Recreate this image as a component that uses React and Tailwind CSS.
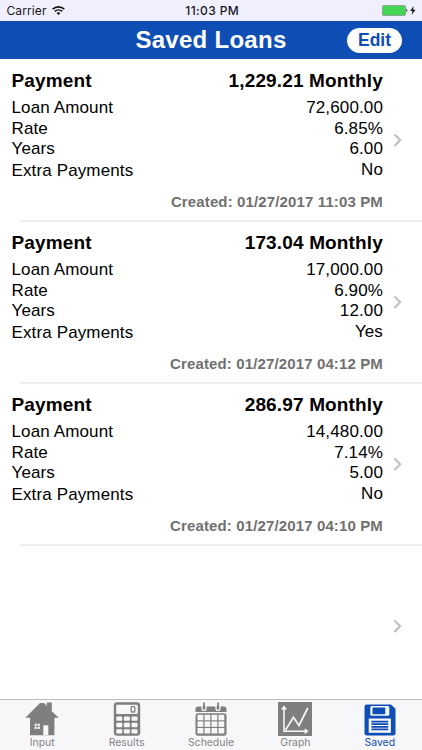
const LOANS = [
  { payment: '1,229.21 Monthly', amount: '72,600.00', rate: '6.85%', years: '6.00', extra: 'No', created: 'Created: 01/27/2017 11:03 PM' },
  { payment: '173.04 Monthly', amount: '17,000.00', rate: '6.90%', years: '12.00', extra: 'Yes', created: 'Created: 01/27/2017 04:12 PM' },
  { payment: '286.97 Monthly', amount: '14,480.00', rate: '7.14%', years: '5.00', extra: 'No', created: 'Created: 01/27/2017 04:10 PM' },
];

function Chevron() {
  return (
    <svg className="h-[14px] w-[10px]" viewBox="0 0 10 14" fill="none" stroke="#bdbdc2" strokeWidth="2">
      <path d="M1.4 1.4 7.2 7.2 1.4 13" />
    </svg>
  );
}

function StatusBar() {
  return (
    <div className="flex h-[21px] items-center bg-[#f0effd] font-['Inter','Liberation_Sans',sans-serif] text-[12px] text-[#17171b]">
      <div className="flex flex-1 items-center gap-[5px] pl-[6.5px]">
        <span className="tracking-[0.1px]">Carrier</span>
        <svg className="h-[9px] w-[13px]" viewBox="0 0 13 9" fill="none" stroke="#111" strokeWidth="1.6">
          <path d="M.7 3.2C4 .1 9 .1 12.3 3.2" />
          <path d="M2.8 5.4c2.1-1.9 5.3-1.9 7.4 0" />
          <path d="M4.5 7c1.1-1.1 2.9-1.1 4 0l-2 2z" fill="#111" stroke="none" />
        </svg>
      </div>
      <span className="pl-px font-medium tracking-[0.4px]">11:03 PM</span>
      <div className="flex flex-1 items-center justify-end pr-[5px]">
        <svg className="h-[11px] w-[35px]" viewBox="0 0 35 11">
          <rect x=".5" y=".5" width="23" height="10" rx="1.2" fill="#43d551" stroke="#8b9b91" strokeWidth=".8" />
          <path d="M24.2 3.8c1.6.4 1.6 3 0 3.4z" fill="#444" />
          <path d="M31.6 1 28.3 6h2.2l-.9 4 3.9-5.2h-2.4z" fill="#111" />
        </svg>
      </div>
    </div>
  );
}

function Header() {
  return (
    <div className="grid h-[38px] grid-cols-[1fr_auto_1fr] items-center bg-[#0f4eb4]">
      <span />
      <h1 className="text-[24px] font-bold leading-[38px] tracking-[0.28px] text-white">Saved Loans</h1>
      <div className="flex justify-end pr-[20px]">
        <button className="h-[25px] w-[55px] rounded-full bg-white text-[17.5px] font-bold leading-[24px] text-[#0f4eb4]">Edit</button>
      </div>
    </div>
  );
}

function LoanRow({ loan }) {
  return (
    <div className="flex h-[162px] flex-col">
      <div className="flex flex-1 items-center">
        {loan && (
          <div className="flex h-[161px] w-[383px] flex-col pl-[11.5px] pt-[10px] text-[17px] text-black">
            <div className="flex h-[29px] justify-between text-[19px] font-bold leading-[24px]">
              <span className="tracking-[0.15px]">Payment</span>
              <span className="tracking-[0.15px]">{loan.payment}</span>
            </div>
            <div className="flex justify-between leading-[20.5px] tracking-[0.13px]">
              <div className="flex flex-col">
                <span>Loan Amount</span>
                <span>Rate</span>
                <span>Years</span>
                <span className="pt-[1.5px]">Extra Payments</span>
              </div>
              <div className="flex flex-col text-right">
                <span>{loan.amount}</span>
                <span>{loan.rate}</span>
                <span>{loan.years}</span>
                <span>{loan.extra}</span>
              </div>
            </div>
            <span className="mt-[10px] text-right text-[15px] font-bold leading-[20px] tracking-[0.13px] text-[#707070]">{loan.created}</span>
          </div>
        )}
        <div className="ml-auto pr-[19px]">
          <Chevron />
        </div>
      </div>
      <div className="ml-[20px] h-px translate-y-[0.5px] bg-[#dedee0]" />
    </div>
  );
}

function HouseIcon() {
  return (
    <svg className="h-[34px] w-[34px]" viewBox="0 0 34 34" fill="#7f7f7f">
      <path d="M.3 15.8 15 1h4.2l2.6 3V.6h5v8.6L33.8 15.8h-4.4v17.4H5V15.8z" />
      <path d="M9.6 21.7h5.2V27H9.6z" fill="#f7f7fa" />
      <path d="M12.2 21.2v6.3M9 24.4h6.4" stroke="#7f7f7f" strokeWidth=".8" />
      <path d="M18.3 23.3h5v9.7h-5z" fill="#f7f7fa" />
    </svg>
  );
}

function CalculatorIcon() {
  return (
    <svg className="h-[34px] w-[28px]" viewBox="0 0 28 34">
      <rect x=".8" y=".2" width="26.4" height="33.6" rx="3.2" fill="#7f7f7f" />
      <rect x="3.2" y="2.8" width="21.6" height="9.2" rx="1" fill="#f7f7fa" />
      <rect x="18.2" y="4.6" width="3.6" height="5.4" rx=".8" fill="none" stroke="#7f7f7f" strokeWidth="1.3" />
      {[14.4, 20.8, 27.2].map((y) =>
        [3.3, 10.9, 18.5].map((x) => <rect key={`${x}-${y}`} x={x} y={y} width="6" height="4.4" rx="1" fill="#f7f7fa" />)
      )}
    </svg>
  );
}

function CalendarIcon() {
  return (
    <svg className="h-[34px] w-[32px]" viewBox="0 0 32 34">
      <path d="M.5 10V7.3Q.5 4.5 3.3 4.5h25.4q2.8 0 2.8 2.8V10z" fill="#7f7f7f" />
      <path d="M7 4.2v2.2a2 2 0 0 0 4 0V4.2M21 4.2v2.2a2 2 0 0 0 4 0V4.2" stroke="#f7f7fa" strokeWidth="1.3" fill="none" />
      <path d="M9 .5v6M23 .5v6" stroke="#7f7f7f" strokeWidth="1.8" />
      <rect x=".5" y="11.3" width="31" height="22.5" rx="2.5" fill="#7f7f7f" />
      {[12.8, 19.4, 26].map((y) =>
        [2.5, 9.5, 16.5, 23.5].map((x) => <rect key={`${x}-${y}`} x={x} y={y} width="5.8" height="5.5" fill="#f7f7fa" />)
      )}
    </svg>
  );
}

function GraphIcon() {
  return (
    <svg className="h-[34px] w-[34px]" viewBox="0 0 34 34" fill="none" stroke="#f7f7fa">
      <rect width="34" height="34" fill="#7f7f7f" stroke="none" />
      <path d="M6 5v24.2h22.5" strokeWidth="1.6" />
      <path d="M3.5 7.2 6 3.8l2.5 3.4zM27 26.8l3.2 2.4-3.2 2.4z" fill="#f7f7fa" strokeWidth=".7" />
      <path d="M7.5 28 15.5 15.2l5.5 8.3L29.8 6" strokeWidth="1.7" />
    </svg>
  );
}

function FloppyIcon() {
  return (
    <svg className="h-[32px] w-[32px]" viewBox="0 0 32 32">
      <path d="M2.8.5H27l4.5 4.2v24.5q0 2.3-2.3 2.3H2.8Q.5 31.5.5 29.2V2.8Q.5.5 2.8.5z" fill="#0f4eb4" />
      <rect x="6.3" y="2" width="19" height="9.7" rx="1.5" fill="#f7f7fa" />
      <rect x="8.5" y="3.6" width="12.8" height="6.6" rx=".8" fill="#0f4eb4" />
      <path d="M4.7 14.5h22.2v14.3H4.7z" fill="#f7f7fa" />
      <path d="M7.4 17.6h16.8M7.4 20.2h16.8M7.4 22.8h16.8M7.4 25.4h16.8" stroke="#0f4eb4" strokeWidth="1.7" />
    </svg>
  );
}

const TABS = [
  { label: 'Input', Icon: HouseIcon },
  { label: 'Results', Icon: CalculatorIcon },
  { label: 'Schedule', Icon: CalendarIcon },
  { label: 'Graph', Icon: GraphIcon },
  { label: 'Saved', Icon: FloppyIcon, active: true },
];

function TabBar() {
  return (
    <nav className="grid h-[51px] shrink-0 grid-cols-5 border-t border-[#bcbcc0] bg-[#f7f7fa] font-['Inter','Liberation_Sans',sans-serif] text-[10.5px] tracking-[-0.05px]">
      {TABS.map(({ label, Icon, active }) => (
        <div key={label} className={active ? 'flex flex-col items-center text-[#0f4eb4]' : 'flex flex-col items-center text-[#858588]'}>
          <div className="flex h-[36px] items-end">
            <Icon />
          </div>
          <span className="leading-[14px]">{label}</span>
        </div>
      ))}
    </nav>
  );
}

export default function App() {
  return (
    <div className="flex h-[750px] w-[422px] flex-col overflow-hidden bg-white font-['Liberation_Sans',Arial,sans-serif]">
      <StatusBar />
      <Header />
      <main className="min-h-0 flex-1 overflow-hidden">
        {LOANS.map((loan) => (
          <LoanRow key={loan.created} loan={loan} />
        ))}
        <LoanRow />
      </main>
      <TabBar />
    </div>
  );
}
